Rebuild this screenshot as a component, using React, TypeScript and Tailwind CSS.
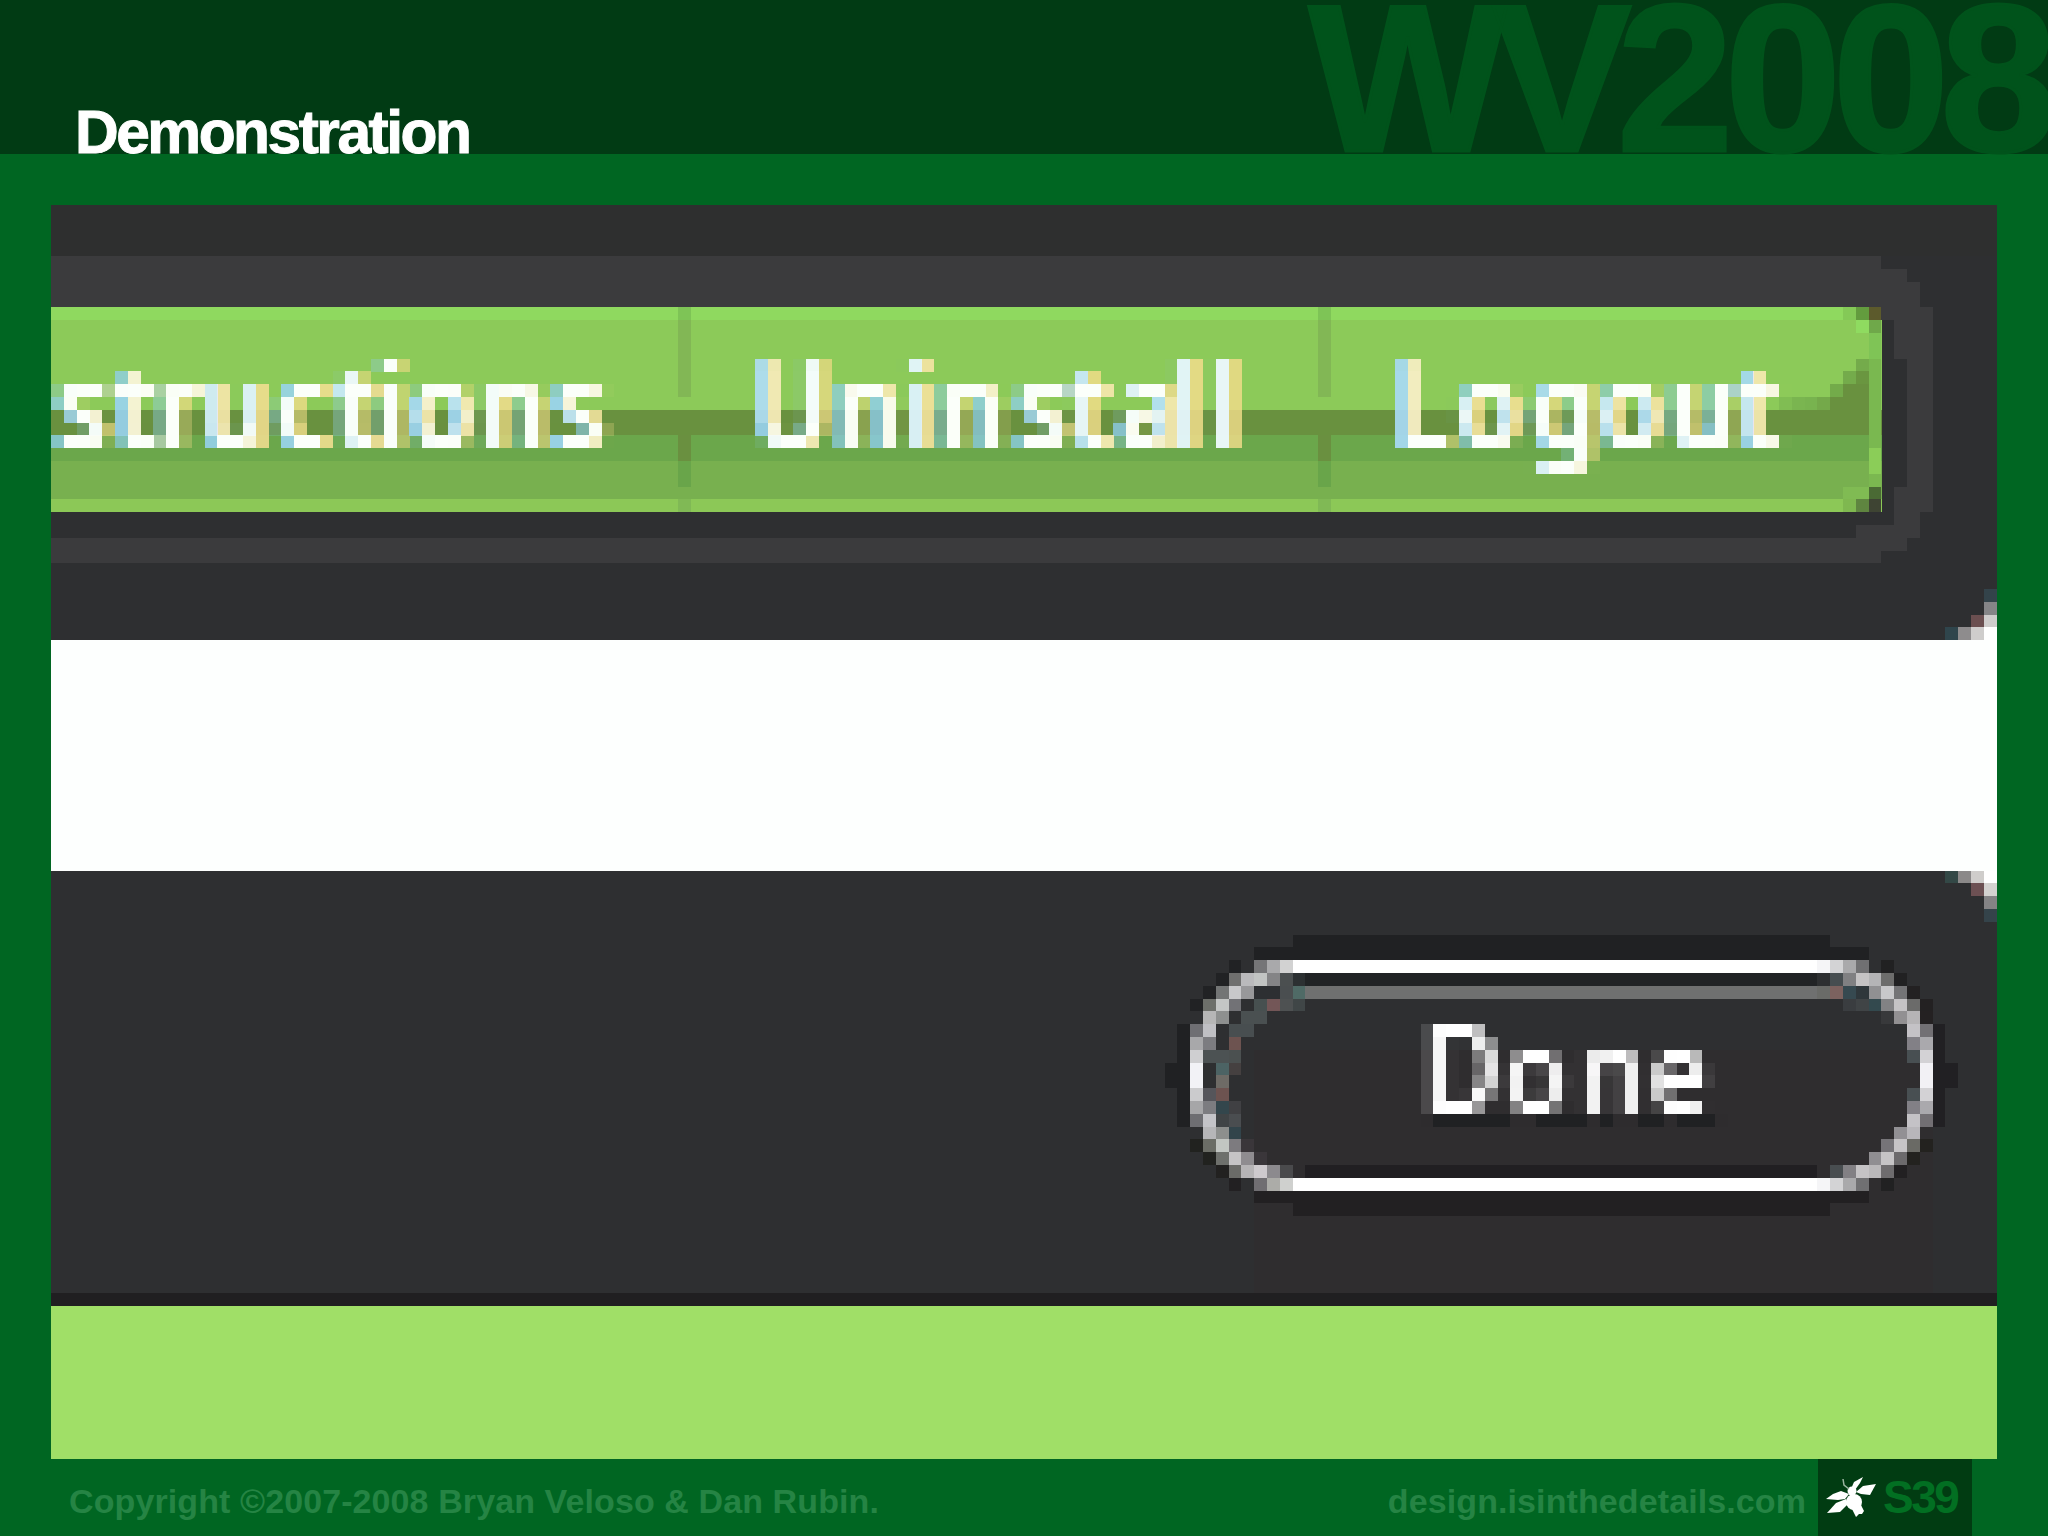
// The slide shows a 152x98 pixel screenshot enlarged so that one pixel is 12.8px.
const CELL = 12.8;

type Run = [row: number, col: number, colors: string, repeat?: number];

// Colours are listed left to right; "-" leaves the pixel untouched.
const navPixels: Run[] = [
  [8, 140, '84c957 639c3e 5c5a2c'],
  [9, 141, '8fdb60 6fa84a'],
  [10, 142, '7fc456'],
  [11, 142, '7fc456'],
  [12, 141, '74ab4b 7ab850'],
  [13, 140, '74ab4b 6a9640 7ab850'],
  [14, 139, '73ab4a 69913f 69913f 7ab850'],
  [15, 135, '80bd53 7ab550 78b34f 74a94a 69913f 69913f 69913f 7ab850'],
  [16, 142, '7ab850'],
  [17, 142, '7ab850'],
  [18, 142, '7ab850'],
  [19, 142, '8bcd58'],
  [20, 142, '8bcd58'],
  [21, 142, '7bb850'],
  [22, 140, '80bb53 80bb53 4a6a34'],
  [23, 140, '7fb850 5f8540 3e4433'],
];

const cornerPixels: Run[] = [
  [30, 151, '33434a'],
  [31, 151, '858587'],
  [32, 150, '6b4f50 cfcdcc'],
  [33, 148, '2f454c 8e8c8d cfcdcc ffffff'],
  [52, 148, '334846 8b8989 cfcdcb ffffff'],
  [53, 150, '6c5053 d4d2d0'],
  [54, 151, '848385'],
  [55, 151, '34434a'],
];

const buttonPixels: Run[] = [
  [57, 97, '202123', 42],
  [58, 94, '202123', 48],
  [59, 92, '212224 - 757577 a9a9ab d2d2d2'],
  [59, 97, 'ffffff', 41],
  [59, 138, 'f5f5f7 d3d3d5 a9a9ab 707072 - 212122'],
  [60, 91, '212224 6f6f6e bababc c2c4c3 848486 4b4f50 2c3032'],
  [60, 98, '212325', 40],
  [60, 138, '2d2f31 464d50 808082 c5c3c4 b4b4b6 6d6d6c 212122'],
  [61, 90, '212224 737575 c8c8ca 98989a 2d2f32 2d2f32 4a4e50 4f6a66'],
  [61, 98, '6f7070', 40],
  [61, 138, '6a6b68 7c625f 364950 2f373b 909092 c8c8ca 747476 232122'],
  [62, 89, '212224 6d6f6a c4c6c5 727276 - 475050 735657 4e5152 404647'],
  [62, 140, '3a3d40 404446 33494e 828284 c5c3c5 6b6b6a 232122'],
  [63, 90, 'b6b6b6 8e908f - 4a5051 4a5051'],
  [63, 143, '38393b 929092 b6b4b6 242122'],
  [64, 88, '202123 6f6f73 c0c0c4 - 484e50 484e50'],
  [64, 145, 'c4c2c6 727074 212023'],
  [65, 88, '202123 a8a8aa 7c7c80 - 6d5350'],
  [65, 145, '828086 aaa9ad 212023'],
  [66, 88, '202123 cfcfd1 4c5253 4c5253 4b5050'],
  [66, 145, '484f52 d3d2d5 212023'],
  [67, 87, '202123 202123 f2f2f6 - 4c6364 454040'],
  [67, 146, 'f2f1f5 212023 212023'],
  [68, 87, '202123 202123 f2f2f6 - 6e6b66'],
  [68, 146, 'f2f1f5 212023 212023'],
  [69, 88, '202123 cbcbcd 55555a 6d5350'],
  [69, 145, '484f52 d3d2d5 212023'],
  [70, 88, '202123 a6a6a8 7c7c80 33464c 404043'],
  [70, 145, '828086 aaa9ad 212023'],
  [71, 88, '202123 6e6e72 c4c4c8 404446 4a4d50'],
  [71, 145, 'c4c2c6 726f73 212023'],
  [72, 90, 'b6b6b8 8d8f8d 32444b'],
  [72, 144, '929094 b8b6ba'],
  [73, 89, '21221f 6b6d66 c2c6c2 7d7b7f 3a363a'],
  [73, 143, '767478 c6c4c6 6a6a65 23221f'],
  [74, 90, '21221f 6e706c c6c4c6 8f8c90 3a363a'],
  [74, 142, '908e92 c6c4c6 6c6a6c 23221f'],
  [75, 91, '222120 6b6b68 b6b4b6 cecace 8c8a8e 4a4a4c'],
  [75, 98, '211f22', 40],
  [75, 139, '484d50 828084 c5c3c5 bab8ba 6e6c6e 222022'],
  [76, 92, '222022 - 706e72 acaca8 cfd0ce'],
  [76, 97, 'ffffff', 41],
  [76, 138, 'f5f5f7 d3d3d5 a9a9ab 707072 - 212122'],
  [77, 94, '222022', 48],
  [78, 97, '222022', 42],
];

function Pixels({ runs }: { runs: Run[] }) {
  return (
    <>
      {runs.map(([row, col, colors, repeat = 1]) =>
        colors.split(' ').map((color, i) =>
          color === '-' ? null : (
            <rect
              key={`${row}-${col}-${i}`}
              x={col + i}
              y={row}
              width={repeat}
              height={1}
              fill={`#${color}`}
            />
          ),
        ),
      )}
    </>
  );
}

// Samples the graphic once per 12.8px cell and grows each sample to fill it.
// Five cells make a whole 64px tile.
const SAMPLES = [6, 19, 32, 44, 57];

function PixelGrid() {
  return (
    <>
      {SAMPLES.map((n) => (
        <feFlood key={`c${n}`} x={n} y={0} width={1} height={64} floodColor="#fff" result={`c${n}`} />
      ))}
      <feMerge x={0} y={0} width={64} height={64} result="cols">
        {SAMPLES.map((n) => (
          <feMergeNode key={n} in={`c${n}`} />
        ))}
      </feMerge>
      {SAMPLES.map((n) => (
        <feFlood key={`r${n}`} x={0} y={n} width={64} height={1} floodColor="#fff" result={`r${n}`} />
      ))}
      <feMerge x={0} y={0} width={64} height={64} result="rows">
        {SAMPLES.map((n) => (
          <feMergeNode key={n} in={`r${n}`} />
        ))}
      </feMerge>
      <feComposite in="cols" in2="rows" operator="in" x={0} y={0} width={64} height={64} />
      <feTile result="dots" />
    </>
  );
}

function Filters() {
  return (
    <defs>
      <filter
        id="subpixel"
        filterUnits="userSpaceOnUse"
        x="0"
        y="0"
        width="1946"
        height="1254"
        colorInterpolationFilters="sRGB"
      >
        <PixelGrid />
        <feFlood floodColor="#8fd0f4" floodOpacity="0.9" />
        <feComposite in2="SourceAlpha" operator="in" />
        <feOffset dx="-7" result="blue" />
        <feFlood floodColor="#f2dc86" floodOpacity="0.9" />
        <feComposite in2="SourceAlpha" operator="in" />
        <feOffset dx="7" result="yellow" />
        <feMerge result="lettering">
          <feMergeNode in="blue" />
          <feMergeNode in="yellow" />
          <feMergeNode in="SourceGraphic" />
        </feMerge>
        <feGaussianBlur in="lettering" stdDeviation="2.2 1" />
        <feComposite in2="dots" operator="in" />
        <feMorphology operator="dilate" radius="6" />
      </filter>
      <filter
        id="grayscale"
        filterUnits="userSpaceOnUse"
        x="0"
        y="0"
        width="1946"
        height="1254"
        colorInterpolationFilters="sRGB"
      >
        <PixelGrid />
        <feGaussianBlur in="SourceGraphic" stdDeviation="3.5 1" />
        <feComposite in2="dots" operator="in" />
        <feMorphology operator="dilate" radius="6" />
      </filter>
    </defs>
  );
}

// Letters are condensed a little; columns are given in screenshot pixels.
const CONDENSE = 0.87;
const at = (...cols: number[]) => cols.map((c) => (c * CELL) / CONDENSE).join(' ');

function Lettering() {
  return (
    <svg
      className="absolute inset-0 h-full w-full font-['Noto_Sans',sans-serif] text-[118px]"
      fill="#fbfffa"
    >
      <Filters />
      <g filter="url(#subpixel)" className="font-medium">
        <g transform={`scale(${CONDENSE} 1)`}>
          <text x={at(0.5, 5, 8.4, 11.9, 17.7, 22.4, 25.5, 28.1, 33.6, 39.3)} y="243">
            structions
          </text>
          <text x={at(54.9, 61.3, 66.8, 69.4, 75.5, 79.6, 83.5, 87.7, 90.7)} y="243">
            Uninstall
          </text>
          <text x={at(104.9, 109.9, 115.7, 121, 126.5, 131.8)} y="243">
            Logout
          </text>
        </g>
      </g>
      <g filter="url(#grayscale)" fill="#202123" aria-hidden="true">
        <path d="M1382 909h77v13h-77zM1484 909h51v13h-51zM1549 909h13v13h-13zM1587 909h26v13h-26zM1626 909h38v13h-38z" />
      </g>
      <g filter="url(#grayscale)" fill="#ffffff" className="font-semibold">
        <g transform={`scale(${CONDENSE} 1)`}>
          <text x={at(107.1, 113.5, 119.4, 124.8)} y="909">
            <tspan className="text-[126px]">D</tspan>one
          </text>
        </g>
      </g>
    </svg>
  );
}

function Divider({ className }: { className: string }) {
  return (
    <div className={`absolute top-0 flex h-full w-[12.8px] flex-col ${className}`}>
      <div className="h-[12.8px] bg-[#7ec456]" />
      <div className="h-[76.8px] bg-[#82b755]" />
      <div className="h-[38.4px]" />
      <div className="h-[25.6px] bg-[#6a9040]" />
      <div className="h-[25.6px] bg-[#69a54a]" />
      <div className="h-[12.8px]" />
      <div className="h-[12.8px] bg-[#80b955]" />
    </div>
  );
}

function Screenshot() {
  return (
    <div className="relative mx-auto mt-[51px] h-[1254.4px] w-[1945.6px] overflow-hidden bg-[#2e2f31]">
      <div className="h-[51.2px] bg-[#2e2f2f]" />
      <div className="h-[51.2px]" />
      <div className="relative h-[204.8px] w-[1830.4px]">
        <div className="h-[12.8px] bg-[#8fd95f]" />
        <div className="h-[89.6px] bg-[#8cca59]" />
        <div className="h-[25.6px] bg-[#69913f]" />
        <div className="h-[25.6px] bg-[#6ba74b]" />
        <div className="h-[38.4px] bg-[#78b04f]" />
        <div className="h-[12.8px] bg-[#8cc857]" />
        <Divider className="left-[627.2px]" />
        <Divider className="left-[1267.2px]" />
      </div>
      <div className="h-[128px]" />
      <div className="h-[230.4px] bg-[#fdfffe]" />
      <div className="h-[422.4px]" />
      <div className="h-[12.8px] bg-[#201f21]" />
      <div className="h-[153.6px] bg-[#a0df67]" />

      <svg
        className="absolute inset-0 h-full w-full"
        viewBox="0 0 152 98"
        preserveAspectRatio="none"
        shapeRendering="crispEdges"
      >
        <path
          fillRule="evenodd"
          fill="#3b3b3d"
          d="M0 4H143V5H145V6H146V8H147V24H146V26H145V27H143V28H0V26H141V25H144V22H145V12H144V9H143V8H0z"
        />
        <path fill="#302d30" d="M94 66H147V85H94z" opacity="0.8" />
        <Pixels runs={navPixels} />
        <Pixels runs={cornerPixels} />
        <Pixels runs={buttonPixels} />
      </svg>
      <Lettering />
    </div>
  );
}

function BugLogo() {
  return (
    <svg className="h-[43px] w-[52px]" viewBox="0 0 52 43" fill="#fff">
      <path d="M26 13 29 6 38 1 35 7 30 14Z" />
      <path d="M31 16 38 10 51 8 45 19 36 18Z" />
      <path d="M24 18 16 15 8 18 1 23 13 24 20 23Z" />
      <path d="M21 23 11 27 2 37 15 36 23 28Z" />
      <circle cx="27" cy="15" r="4.5" />
      <ellipse cx="29" cy="26" rx="8" ry="8" />
      <path d="M27 33 36 29 39 35 37 38H34L31 41Z" />
      <path d="M24 13 19 9 18 3" fill="none" stroke="#9ab5a0" strokeWidth="1.5" />
    </svg>
  );
}

export default function App() {
  return (
    <div className="flex h-[1536px] w-[2048px] flex-col overflow-hidden bg-[#006622] font-['Liberation_Sans',Arial,sans-serif] font-bold">
      <header className="flex h-[154px] shrink-0 justify-between bg-[#013b14]">
        <h1 className="ml-[75px] mt-[102px] text-[60.5px] leading-none tracking-[-2.5px] text-white [-webkit-text-stroke:1px_white]">
          Demonstration
        </h1>
        <div className="mt-[2px] whitespace-nowrap text-[210px] leading-[154px] tracking-[-9px] text-[#00531b] [-webkit-text-stroke:3px_#00531b]">
          <span className="tracking-[-15px]">WV</span>2008
        </div>
      </header>

      <Screenshot />

      <footer className="flex flex-1 items-stretch pl-[69px] pr-[76px] text-[34px] tracking-[0.1px] text-[#258444]">
        <p className="mt-[17px] whitespace-nowrap">
          Copyright ©2007-2008 Bryan Veloso &amp; Dan Rubin.
        </p>
        <p className="ml-auto mr-[12px] mt-[17px]">design.isinthedetails.com</p>
        <div className="flex w-[154px] bg-[#013c12] pl-[7px]">
          <div className="mt-[17px]">
            <BugLogo />
          </div>
          <span className="ml-[6px] mt-[15px] text-[46px] leading-none tracking-[-2.5px] text-[#026f22]">
            S39
          </span>
        </div>
      </footer>
    </div>
  );
}
